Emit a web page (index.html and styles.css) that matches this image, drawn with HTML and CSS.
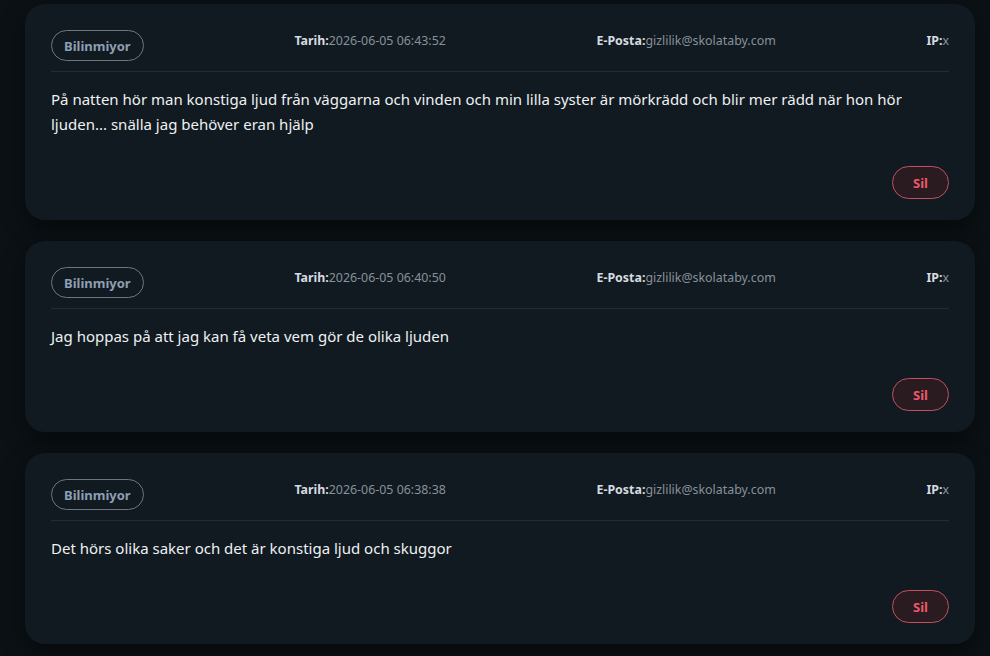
FILE: index.html
```html
<!DOCTYPE html>
<html lang="sv">
<head>
<meta charset="utf-8">
<title>Mesajlar</title>
<link rel="stylesheet" href="styles.css">
</head>
<body>
<main class="list">
  <article class="card">
    <header class="card-head">
      <span class="badge">Bilinmiyor</span>
      <span class="meta"><b>Tarih:</b>2026-06-05 06:43:52</span>
      <span class="meta"><b>E-Posta:</b>gizlilik@skolataby.com</span>
      <span class="meta"><b>IP:</b>x</span>
    </header>
    <p class="msg">På natten hör man konstiga ljud från väggarna och vinden och min lilla syster är mörkrädd och blir mer rädd när hon hör ljuden... snälla jag behöver eran hjälp</p>
    <footer class="card-foot"><button class="btn-del">Sil</button></footer>
  </article>
  <article class="card">
    <header class="card-head">
      <span class="badge">Bilinmiyor</span>
      <span class="meta"><b>Tarih:</b>2026-06-05 06:40:50</span>
      <span class="meta"><b>E-Posta:</b>gizlilik@skolataby.com</span>
      <span class="meta"><b>IP:</b>x</span>
    </header>
    <p class="msg">Jag hoppas på att jag kan få veta vem gör de olika ljuden</p>
    <footer class="card-foot"><button class="btn-del">Sil</button></footer>
  </article>
  <article class="card">
    <header class="card-head">
      <span class="badge">Bilinmiyor</span>
      <span class="meta"><b>Tarih:</b>2026-06-05 06:38:38</span>
      <span class="meta"><b>E-Posta:</b>gizlilik@skolataby.com</span>
      <span class="meta"><b>IP:</b>x</span>
    </header>
    <p class="msg">Det hörs olika saker och det är konstiga ljud och skuggor</p>
    <footer class="card-foot"><button class="btn-del">Sil</button></footer>
  </article>
</main>
</body>
</html>
```
FILE: styles.css
```css
* { box-sizing: border-box; }

html, body {
  margin: 0;
  background: #0b1115;
  font-family: "Noto Sans", "Open Sans", sans-serif;
  color: #e6eaee;
}

.list {
  display: flex;
  flex-direction: column;
  gap: 21px;
  padding: 4px 15px 20px 25px;
}

.card {
  background: #111a20;
  border-radius: 20px;
  padding: 26px 26px 21px;
  box-shadow: 0 8px 24px rgba(0, 0, 0, 0.45);
}

.card-head {
  display: flex;
  justify-content: space-between;
  align-items: flex-start;
  padding-bottom: 10px;
  border-bottom: 1px solid #222c33;
}

.badge {
  display: inline-flex;
  align-items: center;
  height: 31px;
  padding: 0 12px;
  border: 1px solid #6b767f;
  border-radius: 16px;
  font-size: 13px;
  font-weight: 700;
  color: #8d9fb2;
}

.meta {
  margin-top: 2px;
  font-size: 12.4px;
  color: #87919a;
  white-space: nowrap;
}

.meta b {
  color: #d6dbe1;
  font-weight: 700;
}

.msg {
  margin: 15px 0 0;
  font-size: 15px;
  line-height: 25px;
  color: #eef1f3;
}

.card-foot {
  display: flex;
  justify-content: flex-end;
  margin-top: 29px;
}

.btn-del {
  height: 33px;
  width: 57px;
  border: 1px solid #c2505f;
  border-radius: 17px;
  background: #2a1b21;
  color: #ea5a6c;
  font-family: inherit;
  font-size: 13px;
  font-weight: 700;
  cursor: pointer;
}
```
